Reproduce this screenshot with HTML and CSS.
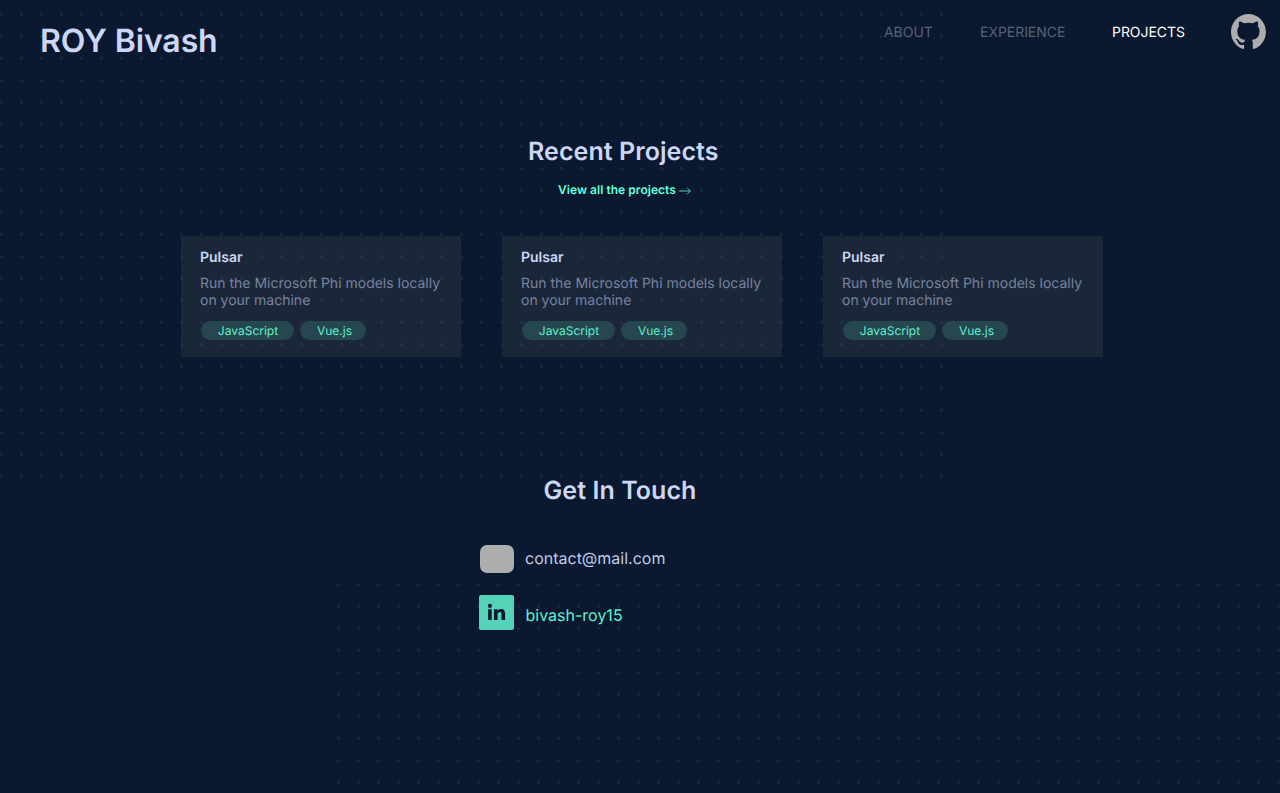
FILE: index.html
```html
<!DOCTYPE html>
<html lang="en">
<head>
<meta charset="utf-8">
<title>ROY Bivash</title>
<link rel="stylesheet" href="styles.css">
</head>
<body>
<div class="page">
  <header class="header">
    <h1 class="brand">ROY Bivash</h1>
    <nav class="nav">
      <a class="nav-link about">ABOUT</a>
      <a class="nav-link experience">EXPERIENCE</a>
      <a class="nav-link active">PROJECTS</a>
      <svg class="github" viewBox="0 0 98 96" preserveAspectRatio="none"><path fill-rule="evenodd" d="M48.854 0C21.839 0 0 22 0 49.217c0 21.756 13.993 40.172 33.405 46.69 2.427.49 3.316-1.059 3.316-2.362 0-1.141-.08-5.052-.08-9.127-13.59 2.934-16.42-5.867-16.42-5.867-2.184-5.704-5.42-7.17-5.42-7.17-4.448-3.015.324-3.015.324-3.015 4.934.326 7.523 5.052 7.523 5.052 4.367 7.496 11.404 5.378 14.235 4.074.404-3.178 1.699-5.378 3.074-6.6-10.839-1.141-22.243-5.378-22.243-24.283 0-5.378 1.94-9.778 5.014-13.2-.485-1.222-2.184-6.275.486-13.038 0 0 4.125-1.304 13.426 5.052a46.97 46.97 0 0 1 12.214-1.63c4.125 0 8.33.571 12.213 1.63 9.302-6.356 13.427-5.052 13.427-5.052 2.67 6.763.97 11.816.485 13.038 3.155 3.422 5.015 7.822 5.015 13.2 0 18.905-11.404 23.06-22.324 24.283 1.78 1.548 3.316 4.481 3.316 9.126 0 6.6-.08 11.897-.08 13.526 0 1.304.89 2.853 3.316 2.364 19.412-6.52 33.405-24.935 33.405-46.691C97.707 22 75.788 0 48.854 0z"/></svg>
    </nav>
  </header>
  <section class="projects">
    <h2 class="heading recent">Recent Projects</h2>
    <a class="view-all"><span class="view-label">View all the projects</span><svg class="arrow" viewBox="0 0 12 8"><path d="M0 4h11.3M8 .7 11.3 4 8 7.3"/></svg></a>
    <div class="cards">
      <article class="card">
        <h3 class="card-title">Pulsar</h3>
        <p class="card-text">Run the Microsoft Phi models locally<br>on your machine</p>
        <div class="tags"><span class="tag js">JavaScript</span><span class="tag vue">Vue.js</span></div>
      </article>
      <article class="card">
        <h3 class="card-title">Pulsar</h3>
        <p class="card-text">Run the Microsoft Phi models locally<br>on your machine</p>
        <div class="tags"><span class="tag js">JavaScript</span><span class="tag vue">Vue.js</span></div>
      </article>
      <article class="card">
        <h3 class="card-title">Pulsar</h3>
        <p class="card-text">Run the Microsoft Phi models locally<br>on your machine</p>
        <div class="tags"><span class="tag js">JavaScript</span><span class="tag vue">Vue.js</span></div>
      </article>
    </div>
  </section>
  <section class="contact">
    <h2 class="heading touch">Get In Touch</h2>
    <div class="contact-row mail"><span class="mail-icon"></span><span class="contact-text mail-text">contact@mail.com</span></div>
    <div class="contact-row linkedin">
      <svg class="linkedin-icon" viewBox="0 0 35 35"><rect class="plate" width="35" height="35" rx="2"/><circle cx="10.9" cy="10.8" r="2.1"/><path d="M9.1 14.2h3.6V25H9.1zM15 14.2h3.4v1.5c.7-1.1 1.9-1.8 3.5-1.8 3.2 0 4.2 2.1 4.2 5V25h-3.6v-5.4c0-1.6-.3-2.7-1.8-2.7s-2.1 1.1-2.1 2.6V25H15z"/></svg>
      <span class="contact-text linkedin-text">bivash-roy15</span>
    </div>
  </section>
</div>
</body>
</html>
```
FILE: styles.css
```css
* { box-sizing: border-box; margin: 0; padding: 0; }
body { background: #0a192f; font-family: Inter, "Liberation Sans", sans-serif; color: #ccd6f6; }
.page { position: relative; z-index: 0; height: 793px; overflow: hidden; white-space: nowrap; text-rendering: geometricPrecision; }
.page::before, .page::after {
  content: ""; position: absolute; z-index: -1;
  background: radial-gradient(circle at 1.5px 1.5px, #17243c 1.4px, transparent 1.9px) 0 0 / 20px 22px;
}
.page::before { left: 0; top: 13px; width: 943px; height: 466px; }
.page::after { left: 337px; top: 583px; right: 0; bottom: 0; }

.header { display: flex; justify-content: space-between; height: 137px; padding: 14px 14px 0 40px; }
.brand { font-size: 32px; font-weight: 600; letter-spacing: -.1px; line-height: 39px; margin-top: 7px; }
.nav { display: flex; align-items: flex-start; }
.nav-link { font-size: 14px; font-weight: 400; letter-spacing: -.04px; line-height: 17px; margin-top: 10px; color: #56617d; }
.about { width: 96px; }
.experience { width: 132px; }
.active { width: 119px; color: #fff; }
.github { width: 35px; height: 35px; fill: #adadad; }

.projects { height: 339px; }
.heading { font-size: 25px; font-weight: 600; letter-spacing: .07px; line-height: 30px; }
.recent { margin-left: 528px; }
.view-all { display: flex; align-items: center; gap: 3px; margin: 15px 0 0 558px; height: 15px; color: #64ffda; }
.view-label { width: 118px; font-size: 12px; font-weight: 600; letter-spacing: .04px; line-height: 15px; }
.arrow { width: 12px; height: 8px; margin-top: 2px; fill: none; stroke: #4fcbb2; stroke-width: 1; }
.cards { display: grid; grid-template-columns: repeat(3, 280px); gap: 41px; padding: 39px 0 0 181px; }
.card { height: 121px; padding: 13px 19px; background: rgba(100, 104, 98, .18); }
.card-title { font-size: 14px; font-weight: 600; line-height: 17px; }
.card-text { margin-top: 9px; font-size: 14px; font-weight: 400; line-height: 17px; color: #7782a1; }
.tags { display: flex; gap: 6px; margin: 12px 0 0 1px; }
.tag { height: 19px; border-radius: 10px; background: #26474f; color: #5eefce; font-size: 12px; line-height: 19px; text-align: center; }
.js { width: 93px; padding-left: 1px; }
.vue { width: 66px; padding-left: 3px; }

.contact { padding-left: 479px; }
.touch { margin-left: 64.5px; }
.contact-row { display: flex; align-items: center; }
.mail { height: 28px; margin: 39px 0 0 1px; gap: 11px; }
.mail-icon { width: 34px; height: 28px; border-radius: 7px; background: #adadad; }
.linkedin { height: 35px; margin-top: 22px; gap: 11.5px; }
.linkedin-icon { width: 35px; height: 35px; fill: #0a192f; }
.plate { fill: #54d3b8; }
.contact-text { font-size: 16px; font-weight: 400; line-height: 19px; }
.mail-text { margin-top: -2px; color: #bfc9e8; }
.linkedin-text { margin-top: 6px; color: #5ff3d1; }
```
